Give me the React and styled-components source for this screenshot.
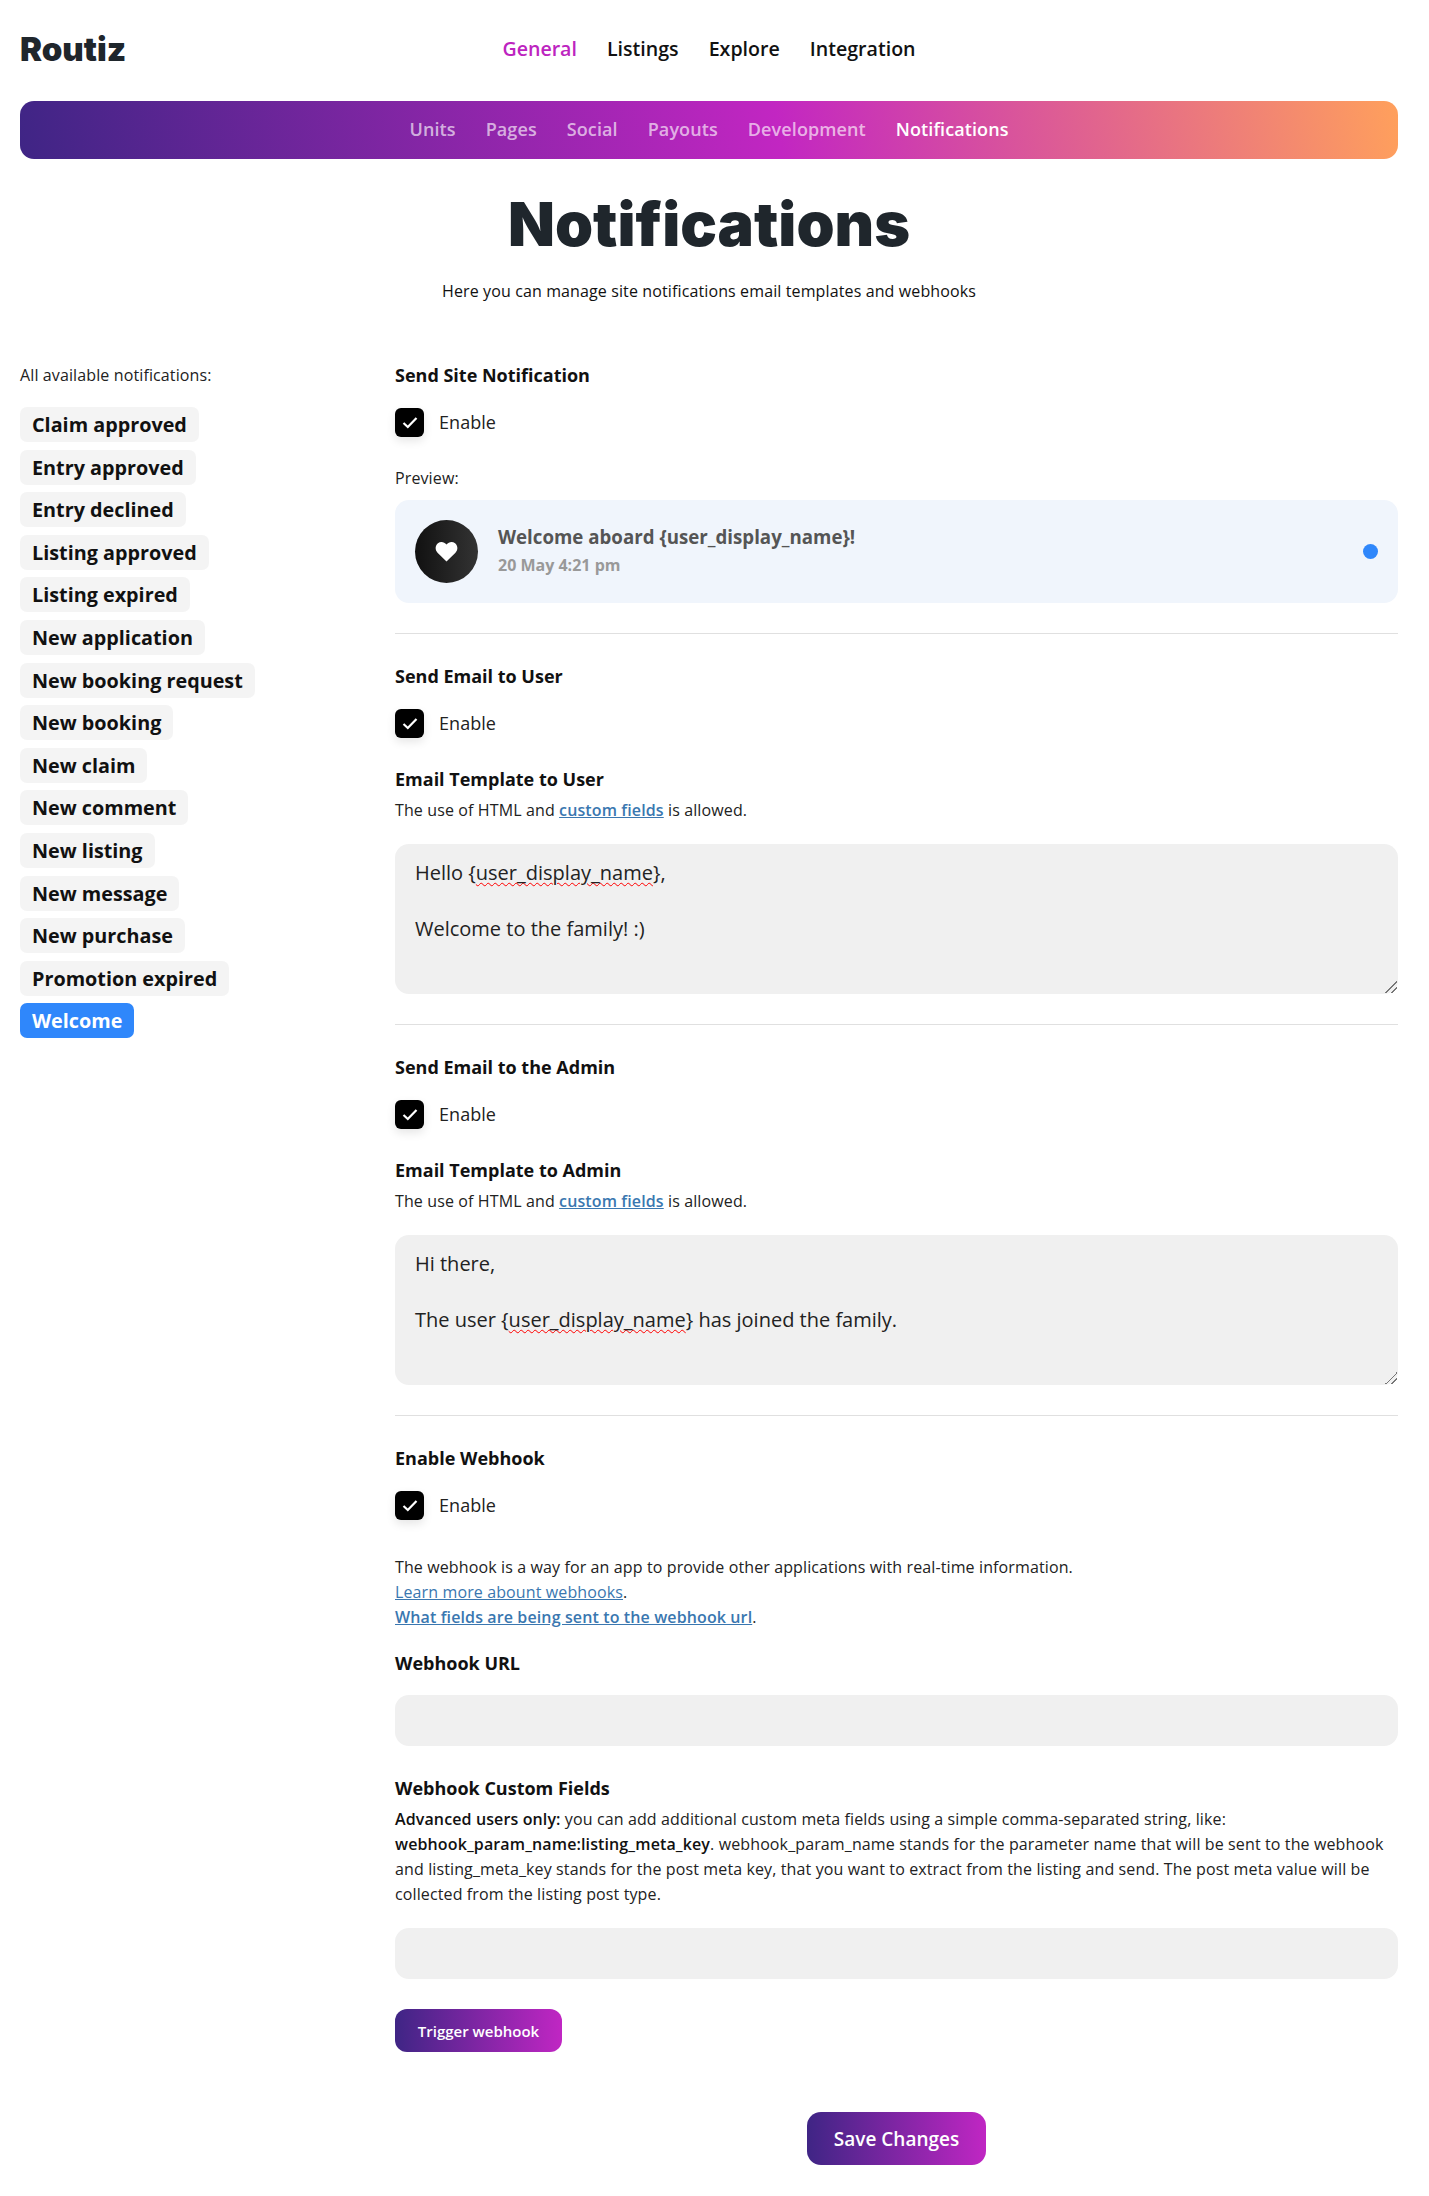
import React from "react";
import styled, { createGlobalStyle } from "styled-components";

const notifications = [
	"Claim approved",
	"Entry approved",
	"Entry declined",
	"Listing approved",
	"Listing expired",
	"New application",
	"New booking request",
	"New booking",
	"New claim",
	"New comment",
	"New listing",
	"New message",
	"New purchase",
	"Promotion expired",
	"Welcome"
];

const mainLinks = ["General", "Listings", "Explore", "Integration"];
const subLinks = ["Units", "Pages", "Social", "Payouts", "Development", "Notifications"];

const Enable = () => (
	<CheckRow>
		<CheckBox>
			<svg width="16" height="13" viewBox="0 0 16 13" fill="none">
				<path d="M1.5 7 5.8 11 14.5 2" stroke="#fff" strokeWidth="2.2" />
			</svg>
		</CheckBox>
		<CheckLabel>Enable</CheckLabel>
	</CheckRow>
);

const Misspelled = () => <Squiggle>user_display_name</Squiggle>;

const App = () => {
	return (
		<Page>
			<GlobalStyle />
			<Header>
				<Logo>Routiz</Logo>
				<MainNav>
					{mainLinks.map((link) => (
						<MainLink key={link} $active={link === "General"}>
							{link}
						</MainLink>
					))}
				</MainNav>
			</Header>

			<SubBar>
				{subLinks.map((link) => (
					<SubLink key={link} $active={link === "Notifications"}>
						{link}
					</SubLink>
				))}
			</SubBar>

			<PageTitle>Notifications</PageTitle>
			<PageIntro>Here you can manage site notifications email templates and webhooks</PageIntro>

			<Columns>
				<Sidebar>
					<SidebarTitle>All available notifications:</SidebarTitle>
					<ChipList>
						{notifications.map((name) => (
							<Chip key={name} $active={name === "Welcome"}>
								{name}
							</Chip>
						))}
					</ChipList>
				</Sidebar>

				<Main>
					<Section>
						<Heading>Send Site Notification</Heading>
						<Enable />
						<PreviewLabel>Preview:</PreviewLabel>
						<PreviewCard>
							<Avatar>
								<svg width="23" height="21" viewBox="0 0 24 22" fill="#fff">
									<path d="M12 21.5 2.6 12.2C-.3 9.2.1 4.6 3 2.3 5.8.1 9.6.6 12 3.7 14.4.6 18.2.1 21 2.3c2.9 2.3 3.3 6.9.4 9.9L12 21.5Z" />
								</svg>
							</Avatar>
							<PreviewText>
								<PreviewTitle>Welcome aboard {"{user_display_name}"}!</PreviewTitle>
								<PreviewDate>20 May 4:21 pm</PreviewDate>
							</PreviewText>
							<UnreadDot />
						</PreviewCard>
					</Section>

					<Section>
						<Heading>Send Email to User</Heading>
						<Enable />
						<SubHeading>Email Template to User</SubHeading>
						<Hint>
							The use of HTML and <BoldLink>custom fields</BoldLink> is allowed.
						</Hint>
						<TextArea>
							<div>
								Hello {"{"}
								<Misspelled />
								{"},"}
							</div>
							<br />
							<div>Welcome to the family! :)</div>
							<Grip />
						</TextArea>
					</Section>

					<Section>
						<Heading>Send Email to the Admin</Heading>
						<Enable />
						<SubHeading>Email Template to Admin</SubHeading>
						<Hint>
							The use of HTML and <BoldLink>custom fields</BoldLink> is allowed.
						</Hint>
						<TextArea>
							<div>Hi there,</div>
							<br />
							<div>
								The user {"{"}
								<Misspelled />
								{"}"} has joined the family.
							</div>
							<Grip />
						</TextArea>
					</Section>

					<LastSection>
						<Heading>Enable Webhook</Heading>
						<Enable />
						<WebhookInfo>
							The webhook is a way for an app to provide other applications with real-time information.
							<br />
							<PlainLink>Learn more abount webhooks</PlainLink>.
							<br />
							<BoldLink>What fields are being sent to the webhook url</BoldLink>.
						</WebhookInfo>
						<FieldHeading>Webhook URL</FieldHeading>
						<Input />
						<CustomHeading>Webhook Custom Fields</CustomHeading>
						<Hint>
							<strong>Advanced users only:</strong> you can add additional custom meta fields using a
							simple comma-separated string, like: <strong>webhook_param_name:listing_meta_key</strong>.
							webhook_param_name stands for the parameter name that will be sent to the webhook and
							listing_meta_key stands for the post meta key, that you want to extract from the listing
							and send. The post meta value will be collected from the listing post type.
						</Hint>
						<CustomInput />
						<TriggerButton>Trigger webhook</TriggerButton>
					</LastSection>

					<SaveRow>
						<SaveButton>Save Changes</SaveButton>
					</SaveRow>
				</Main>
			</Columns>
		</Page>
	);
};

export default App;

const GlobalStyle = createGlobalStyle`
	html,
	body {
		margin: 0;
		background: #fff;
		color: #111;
		font-family: "Open Sans", "Liberation Sans", sans-serif;
	}

	* {
		box-sizing: border-box;
	}
`;

const Page = styled.div`
	width: 1429px;
	height: 2196px;
	padding: 0 31px 0 20px;
	overflow: hidden;
`;

const Header = styled.header`
	position: relative;
	height: 101px;
	padding-top: 26px;
`;

const Logo = styled.div`
	font-family: "Inter", sans-serif;
	font-weight: 900;
	font-size: 33px;
	line-height: 46px;
	color: #1f262c;
`;

// the menu sits centred over the logo row
const MainNav = styled.nav`
	position: absolute;
	top: 36px;
	left: 0;
	right: 0;
	display: flex;
	justify-content: center;
	gap: 30px;
`;

const MainLink = styled.a`
	font-size: 19.6px;
	line-height: 26px;
	font-weight: 600;
	color: ${(props) => (props.$active ? "#bd24bf" : "#111")};
`;

const SubBar = styled.nav`
	height: 58px;
	padding-bottom: 2px;
	border-radius: 14px;
	background: linear-gradient(80deg, #3f2585 0%, #c226c2 55%, #ffa05c 100%);
	display: flex;
	align-items: center;
	justify-content: center;
	gap: 30px;
`;

const SubLink = styled.a`
	font-size: 18px;
	font-weight: 600;
	line-height: 26px;
	letter-spacing: 0.1px;
	color: ${(props) => (props.$active ? "#fff" : "rgba(255, 255, 255, 0.65)")};
`;

const PageTitle = styled.h1`
	margin: 29px 0 0;
	text-align: center;
	font-family: "Inter", sans-serif;
	font-size: 61px;
	line-height: 72px;
	font-weight: 900;
	color: #1f262c;
`;

const PageIntro = styled.p`
	margin: 19px 0 0;
	text-align: center;
	font-size: 16px;
	line-height: 24px;
	letter-spacing: 0.12px;
`;

const Columns = styled.div`
	margin-top: 60px;
	display: flex;
`;

const Sidebar = styled.aside`
	width: 375px;
	flex-shrink: 0;
`;

const SidebarTitle = styled.div`
	font-size: 16px;
	line-height: 24px;
	letter-spacing: 0.12px;
	color: #222;
`;

const ChipList = styled.div`
	margin-top: 20px;
	display: flex;
	flex-direction: column;
	align-items: flex-start;
	gap: 7.6px;
`;

const Chip = styled.a`
	height: 35px;
	padding: 0 12px;
	border-radius: 7px;
	display: flex;
	align-items: center;
	font-size: 19.8px;
	font-weight: 700;
	color: ${(props) => (props.$active ? "#fff" : "#111")};
	background: ${(props) => (props.$active ? "#2f87fb" : "#f4f4f4")};
`;

const Main = styled.main`
	flex: 1;
	min-width: 0;
`;

const Section = styled.section`
	padding-bottom: 30px;
	margin-bottom: 30px;
	border-bottom: 1px solid #e0e0e0;
`;

const LastSection = styled.section``;

const Heading = styled.h3`
	margin: 0;
	font-size: 18px;
	line-height: 24px;
	font-weight: 700;
	color: #111;
`;

const CheckRow = styled.div`
	margin-top: 21px;
	display: flex;
	align-items: center;
	gap: 15px;
`;

const CheckBox = styled.span`
	width: 29px;
	height: 29px;
	border-radius: 6px;
	background: #000;
	box-shadow: 0 4px 10px rgba(0, 0, 0, 0.1);
	display: flex;
	align-items: center;
	justify-content: center;
`;

const CheckLabel = styled.span`
	font-size: 18px;
	line-height: 29px;
	letter-spacing: 0.05px;
	color: #222;
`;

const PreviewLabel = styled.div`
	margin-top: 29px;
	font-size: 16px;
	line-height: 24px;
	letter-spacing: 0.12px;
	color: #222;
`;

const PreviewCard = styled.div`
	margin-top: 10px;
	height: 103px;
	padding: 0 20px;
	border-radius: 14px;
	background: #f0f5fc;
	display: flex;
	align-items: center;
	gap: 20px;
`;

const Avatar = styled.div`
	width: 63px;
	height: 63px;
	border-radius: 50%;
	flex-shrink: 0;
	background: linear-gradient(90deg, #111, #333);
	display: flex;
	align-items: center;
	justify-content: center;
`;

const PreviewText = styled.div`
	flex: 1;
	padding-bottom: 3px;
`;

const PreviewTitle = styled.div`
	font-size: 18.7px;
	line-height: 28px;
	font-weight: 700;
	color: #555;
`;

const PreviewDate = styled.div`
	margin-top: 2px;
	font-size: 16px;
	line-height: 24px;
	font-weight: 700;
	color: #999;
`;

const UnreadDot = styled.span`
	width: 15px;
	height: 15px;
	border-radius: 50%;
	background: #2f87fb;
`;

const SubHeading = styled(Heading)`
	margin-top: 29px;
`;

const Hint = styled.p`
	margin: 7px 0 0;
	font-size: 16px;
	line-height: 25px;
	letter-spacing: 0.12px;
	color: #222;

	strong {
		font-weight: 600;
		color: #111;
	}
`;

const PlainLink = styled.a`
	color: #3a77b0;
	text-decoration: underline;
`;

const BoldLink = styled(PlainLink)`
	font-weight: 600;
`;

const TextArea = styled.div`
	position: relative;
	margin-top: 21px;
	height: 150px;
	padding: 15px 20px;
	border-radius: 14px;
	background: #f0f0f0;
	font-size: 20px;
	line-height: 28px;
	color: #222;
`;

const Squiggle = styled.span`
	text-decoration: underline wavy #f00 1px;
	text-underline-offset: 2px;
`;

// the browser's textarea resize handle
const Grip = styled.span`
	position: absolute;
	right: 1px;
	bottom: 1px;
	width: 12px;
	height: 12px;
	background: linear-gradient(
		135deg,
		transparent 0 50%,
		#777 50% 58%,
		transparent 58% 72%,
		#777 72% 80%,
		transparent 80%
	);
`;

const WebhookInfo = styled.p`
	margin: 35px 0 0;
	font-size: 16px;
	line-height: 25px;
	letter-spacing: 0.12px;
	color: #222;
`;

const FieldHeading = styled(Heading)`
	margin-top: 21px;
`;

const Input = styled.div`
	margin-top: 20px;
	height: 51px;
	border-radius: 14px;
	background: #f0f0f0;
`;

const CustomHeading = styled(Heading)`
	margin-top: 30px;
`;

const CustomInput = styled(Input)`
	margin-top: 21px;
`;

const TriggerButton = styled.button`
	margin-top: 30px;
	display: block;
	width: 167px;
	height: 43px;
	padding: 0;
	border: 0;
	border-radius: 12px;
	background: linear-gradient(90deg, #3f2585, #c026c3);
	color: #fff;
	font-family: inherit;
	font-size: 15px;
	font-weight: 600;
`;

const SaveRow = styled.div`
	margin-top: 60px;
	display: flex;
	justify-content: center;
`;

const SaveButton = styled(TriggerButton)`
	margin-top: 0;
	width: 179px;
	height: 53px;
	border-radius: 14px;
	font-size: 19px;
`;
